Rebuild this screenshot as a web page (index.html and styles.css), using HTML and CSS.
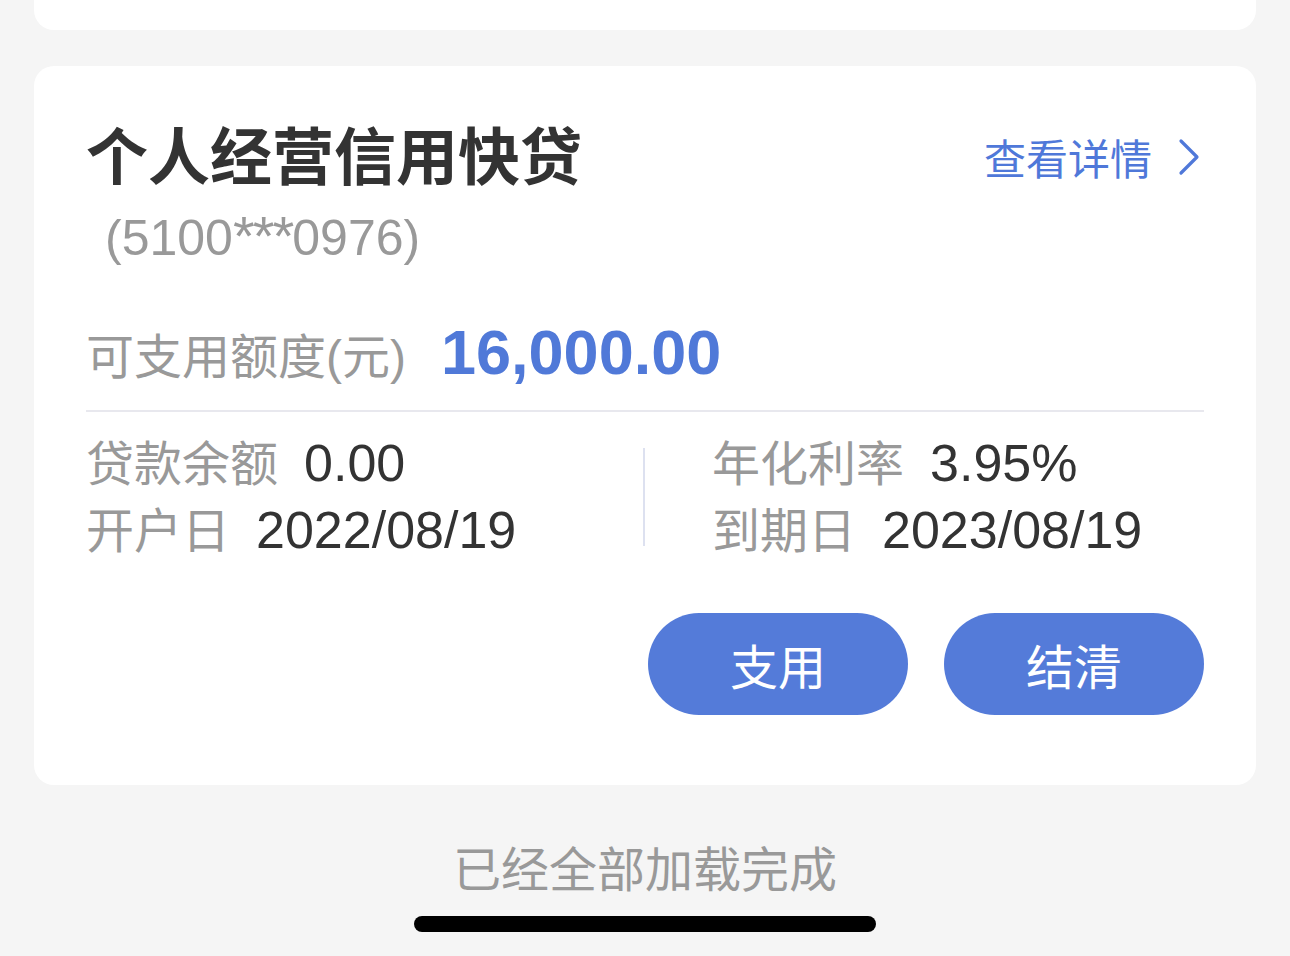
FILE: index.html
```html
<!DOCTYPE html>
<html lang="zh-CN">
<head>
<meta charset="utf-8">
<title>个人经营信用快贷</title>
<link rel="stylesheet" href="styles.css">
</head>
<body>
<div class="page">
  <div class="card card-prev"></div>
  <div class="card loan">
    <div class="loan-head">
      <div class="loan-name">
        <div class="title">个人经营信用快贷</div>
        <div class="acct">(5100<span class="mask">***</span>0976)</div>
      </div>
      <a class="detail" href="#">查看详情<svg class="chev" width="22" height="38" viewBox="0 0 22 38"><polyline points="3,3 19,19 3,35" fill="none" stroke="#4f78d9" stroke-width="3.2" stroke-linecap="round" stroke-linejoin="round"/></svg></a>
    </div>
    <div class="credit">
      <span class="credit-label">可支用额度(元)</span>
      <span class="credit-value">16,000.00</span>
    </div>
    <div class="divider"></div>
    <div class="info">
      <div class="info-col">
        <div class="info-row"><span class="lbl">贷款余额</span><span class="val">0.00</span></div>
        <div class="info-row"><span class="lbl">开户日</span><span class="val">2022/08/19</span></div>
      </div>
      <div class="sep"></div>
      <div class="info-col info-col-right">
        <div class="info-row"><span class="lbl">年化利率</span><span class="val">3.95%</span></div>
        <div class="info-row"><span class="lbl">到期日</span><span class="val">2023/08/19</span></div>
      </div>
    </div>
    <div class="actions">
      <button class="btn">支用</button>
      <button class="btn">结清</button>
    </div>
  </div>
  <div class="footer">已经全部加载完成</div>
  <div class="home-bar"></div>
</div>
</body>
</html>
```

FILE: styles.css
```css
html, body {
  margin: 0;
  padding: 0;
  background: #f5f5f5;
}
body {
  width: 1290px;
  height: 956px;
  overflow: hidden;
  font-family: "Liberation Sans", "Noto Sans CJK SC", sans-serif;
}
.page {
  display: flex;
  flex-direction: column;
  align-items: center;
}
.card {
  background: #fff;
  width: 1222px;
  box-sizing: border-box;
}
.card-prev {
  height: 30px;
  border-radius: 0 0 20px 20px;
}
.loan {
  margin-top: 36px;
  border-radius: 20px;
  padding: 49px 52px 70px 52px;
  display: flex;
  flex-direction: column;
}
.loan-head {
  display: flex;
  justify-content: space-between;
  align-items: flex-start;
}
.title {
  font-family: "Noto Sans CJK SC", sans-serif;
  font-weight: 700;
  font-size: 62px;
  line-height: 76px;
  color: #333;
}
.acct {
  font-size: 50px;
  line-height: 60px;
  color: #999;
  padding-left: 19px;
  margin-top: 15px;
}
.mask {
  font-size: 56px;
  letter-spacing: -2px;
}
.detail {
  display: flex;
  align-items: center;
  gap: 26px;
  margin-top: 14px;
  font-family: "Noto Sans CJK SC", sans-serif;
  font-size: 42px;
  line-height: 56px;
  color: #4f78d9;
  text-decoration: none;
  margin-right: 4px;
}
.credit {
  display: flex;
  align-items: baseline;
  gap: 35px;
  margin-top: 52px;
}
.credit-label {
  font-size: 48px;
  line-height: 64px;
  color: #999;
}
.credit-value {
  font-size: 63px;
  font-weight: 700;
  line-height: 64px;
  color: #5079d8;
}
.divider {
  height: 2px;
  background: #e8e8ee;
  margin: 20px 0 0 0;
}
.info {
  display: grid;
  grid-template-columns: 557px 2px 1fr;
  align-items: center;
  margin-top: 18px;
}
.info-col {
  display: flex;
  flex-direction: column;
}
.info-col-right {
  padding-left: 67px;
}
.info-row {
  display: flex;
  align-items: baseline;
  gap: 26px;
  height: 67px;
}
.lbl {
  font-size: 48px;
  line-height: 67px;
  color: #999;
}
.val {
  font-size: 52px;
  line-height: 67px;
  color: #333;
}
.sep {
  width: 2px;
  height: 98px;
  background: #dde1f0;
}
.actions {
  display: flex;
  justify-content: flex-end;
  gap: 36px;
  margin-top: 49px;
}
.btn {
  width: 260px;
  height: 102px;
  border: none;
  border-radius: 51px;
  background: #547bd9;
  color: #fff;
  font-family: "Noto Sans CJK SC", sans-serif;
  font-size: 48px;
  padding: 0;
}
.footer {
  margin-top: 53px;
  font-family: "Noto Sans CJK SC", sans-serif;
  font-size: 48px;
  line-height: 56px;
  color: #999;
}
.home-bar {
  margin-top: 22px;
  width: 462px;
  height: 16px;
  border-radius: 8px;
  background: #000;
}
```
